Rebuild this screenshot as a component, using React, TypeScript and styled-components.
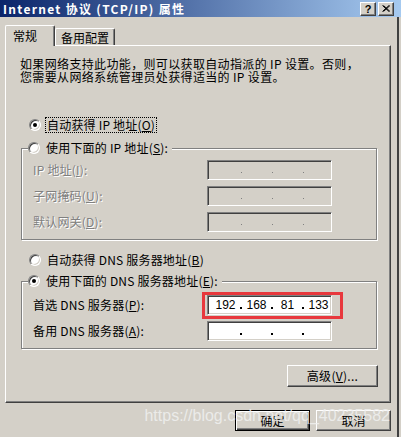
import React from 'react';
import styled, { createGlobalStyle } from 'styled-components';

const GlobalStyle = createGlobalStyle`
  html, body {
    margin: 0;
    padding: 0;
    background: #d4d0c8;
  }
  body {
    font-family: "Noto Sans CJK SC", "Liberation Sans", sans-serif;
    font-size: 12px;
    color: #000;
  }
`;

const Dialog = styled.div`
  position: relative;
  width: 401px;
  height: 437px;
  background: #d4d0c8;
  overflow: hidden;
`;

const TitleBar = styled.div`
  height: 17px;
  display: flex;
  align-items: center;
  padding: 0 7px 0 3px;
  background: linear-gradient(to right, #0a246a, #a6caf0);
`;

const TitleText = styled.div`
  flex: 1;
  color: #fff;
  font-weight: bold;
  font-size: 12px;
  line-height: 17px;
  letter-spacing: 1.3px;
  white-space: nowrap;
`;

const TitleButtons = styled.div`
  display: flex;
  gap: 2px;
`;

const CaptionButton = styled.div`
  width: 16px;
  height: 14px;
  box-sizing: border-box;
  background: #d4d0c8;
  border-top: 1px solid #fff;
  border-left: 1px solid #fff;
  border-right: 1px solid #404040;
  border-bottom: 1px solid #404040;
  box-shadow: inset -1px -1px 0 #808080;
  display: flex;
  align-items: center;
  justify-content: center;
  font-family: "Liberation Sans", sans-serif;
  font-weight: bold;
  font-size: 11px;
  line-height: 12px;
`;

const Body = styled.div`
  width: 399px;
  height: 420px;
  box-sizing: border-box;
  padding: 8px 0 0 5px;
  border-right: 2px solid #404040;
  display: flex;
  flex-direction: column;
`;

const TabRow = styled.div`
  display: flex;
  align-items: flex-end;
  height: 20px;
`;

const Tab = styled.div<{ $active?: boolean }>`
  position: relative;
  z-index: ${p => (p.$active ? 2 : 1)};
  height: ${p => (p.$active ? '21px' : '17px')};
  margin-bottom: ${p => (p.$active ? '-1px' : '0')};
  box-sizing: border-box;
  padding: ${p => (p.$active ? '2px 0 0 7px' : '1px 0 0 5px')};
  width: ${p => (p.$active ? '50px' : '60px')};
  background: #d4d0c8;
  border-top: 1px solid #fff;
  border-left: 1px solid #fff;
  border-right: 1px solid #404040;
  box-shadow: inset -1px 0 0 #808080;
  border-radius: 2px 2px 0 0;
  line-height: 15px;
  white-space: nowrap;
`;

const Panel = styled.div`
  position: relative;
  z-index: 1;
  width: 386px;
  height: 358px;
  box-sizing: border-box;
  border-top: 1px solid #fff;
  border-left: 1px solid #fff;
  border-right: 1px solid #404040;
  border-bottom: 1px solid #404040;
  box-shadow: inset -1px -1px 0 #808080;
  padding: 11px 13px 0 15px;
  display: flex;
  flex-direction: column;
`;

const Intro = styled.p`
  margin: 0 0 0 -1px;
  line-height: 13px;
  letter-spacing: 0.35px;
  white-space: nowrap;
`;

const RadioRow = styled.div<{ $top: number }>`
  display: flex;
  align-items: center;
  height: 16px;
  margin-top: ${p => p.$top}px;
  padding-left: 8px;
  gap: 4px;
`;

const Radio = styled.span<{ $checked?: boolean }>`
  width: 12px;
  height: 12px;
  box-sizing: border-box;
  flex-shrink: 0;
  border-radius: 50%;
  border: 1px solid;
  border-color: #808080 #fff #fff #808080;
  box-shadow: inset 1px 1px 0 #404040, inset -1px -1px 0 #d4d0c8;
  background: #fff;
  display: inline-flex;
  align-items: center;
  justify-content: center;

  &::after {
    content: '';
    width: 4px;
    height: 4px;
    border-radius: 50%;
    background: ${p => (p.$checked ? '#000' : 'transparent')};
  }
`;

const RadioLabel = styled.span<{ $focused?: boolean }>`
  height: 16px;
  box-sizing: border-box;
  padding: 0 1px;
  line-height: 14px;
  letter-spacing: 0.2px;
  border: 1px dotted ${p => (p.$focused ? '#000' : 'transparent')};
  white-space: nowrap;
`;

const Group = styled.div<{ $top: number }>`
  margin-top: ${p => p.$top}px;
  border: 1px solid #808080;
  box-shadow: inset 1px 1px 0 #fff, 1px 1px 0 #fff;
  display: flex;
  flex-direction: column;
`;

const GroupHeader = styled.div`
  align-self: flex-start;
  margin: -9px 0 0 6px;
  padding-right: 2px;
  height: 16px;
  background: #d4d0c8;
  display: flex;
  align-items: center;
  gap: 4px;
`;

const FieldGrid = styled.div<{ $top: number }>`
  display: grid;
  grid-template-columns: 174px 125px;
  grid-auto-rows: 20px;
  row-gap: 6px;
  padding: ${p => p.$top}px 0 7px 11px;
`;

const FieldLabel = styled.span<{ $disabled?: boolean }>`
  align-self: center;
  line-height: 14px;
  letter-spacing: 0.2px;
  white-space: nowrap;
  color: ${p => (p.$disabled ? '#808080' : '#000')};
  text-shadow: ${p => (p.$disabled ? '1px 1px 0 #fff' : 'none')};
`;

const Key = styled.span`
  text-decoration: underline;
`;

const IpBox = styled.div<{ $disabled?: boolean }>`
  width: 125px;
  height: 20px;
  box-sizing: border-box;
  border-top: 1px solid #808080;
  border-left: 1px solid #808080;
  border-right: 1px solid #fff;
  border-bottom: 1px solid #fff;
  box-shadow: inset 1px 1px 0 #404040, inset -1px -1px 0 #d4d0c8;
  background: ${p => (p.$disabled ? '#d4d0c8' : '#fff')};
  color: ${p => (p.$disabled ? '#808080' : '#000')};
  display: flex;
  align-items: center;
  padding-left: 3px;
  overflow: hidden;
  font-family: "Liberation Sans", sans-serif;
  font-size: 12px;
`;

const Octet = styled.span`
  width: 29px;
  flex-shrink: 0;
  text-align: center;
  line-height: 16px;
`;

const Dot = styled.span<{ $disabled?: boolean }>`
  width: 2px;
  flex-shrink: 0;
  display: flex;
  justify-content: center;
  margin-top: ${p => (p.$disabled ? 4 : 6)}px;

  &::before {
    content: '';
    width: ${p => (p.$disabled ? 1 : 2)}px;
    height: ${p => (p.$disabled ? 1 : 2)}px;
    background: ${p => (p.$disabled ? '#808080' : '#000')};
  }
`;

const Highlight = styled.div`
  position: absolute;
  left: -5px;
  top: -3px;
  width: 141px;
  height: 27px;
  box-sizing: border-box;
  border: 3px solid #e8383d;
  pointer-events: none;
`;

const Button = styled.button<{ $default?: boolean; $width?: number }>`
  width: ${p => p.$width ?? 75}px;
  height: ${p => (p.$width ? 22 : 21)}px;
  box-sizing: border-box;
  padding: 0;
  background: #d4d0c8;
  font-family: "Noto Sans CJK SC", "Liberation Sans", sans-serif;
  font-size: 12px;
  line-height: 14px;
  color: #000;
  border-top: 1px solid ${p => (p.$default ? '#000' : '#fff')};
  border-left: 1px solid ${p => (p.$default ? '#000' : '#fff')};
  border-right: 1px solid ${p => (p.$default ? '#000' : '#404040')};
  border-bottom: 1px solid ${p => (p.$default ? '#000' : '#404040')};
  box-shadow: ${p =>
    p.$default
      ? 'inset 1px 1px 0 #fff, inset -1px -1px 0 #404040, inset -2px -2px 0 #808080'
      : 'inset -1px -1px 0 #808080'};
`;

const AdvancedButton = styled(Button)`
  align-self: flex-end;
  margin: 16px -1px 0 0;
  letter-spacing: 0.3px;
`;

const ButtonRow = styled.div`
  display: flex;
  justify-content: flex-end;
  gap: 6px;
  margin-top: 7px;
  padding-right: 6px;
`;

const Watermark = styled.div`
  position: absolute;
  right: 11px;
  top: 406px;
  font-family: "Liberation Sans", sans-serif;
  font-size: 16px;
  line-height: 20px;
  color: rgba(240, 240, 240, 0.85);
  pointer-events: none;
  white-space: nowrap;
`;

type IpProps = { value?: string[]; disabled?: boolean };

const IpField: React.FC<IpProps> = ({ value = ['', '', '', ''], disabled }) => (
  <IpBox $disabled={disabled}>
    {value.map((part, i) => (
      <React.Fragment key={i}>
        {i > 0 && <Dot $disabled={disabled} />}
        <Octet>{part}</Octet>
      </React.Fragment>
    ))}
  </IpBox>
);

const CloseGlyph = () => (
  <svg width="8" height="7" viewBox="0 0 8 7">
    <path d="M0.5 0.5 L7 6.5 M1.5 0.5 L8 6.5 M7 0.5 L0.5 6.5 M8 0.5 L1.5 6.5" stroke="#000" strokeWidth="1" />
  </svg>
);

const App: React.FC = () => {
  return (
    <>
      <GlobalStyle />
      <Dialog>
        <TitleBar>
          <TitleText>Internet 协议 (TCP/IP) 属性</TitleText>
          <TitleButtons>
            <CaptionButton>?</CaptionButton>
            <CaptionButton>
              <CloseGlyph />
            </CaptionButton>
          </TitleButtons>
        </TitleBar>

        <Body>
          <TabRow>
            <Tab $active>常规</Tab>
            <Tab>备用配置</Tab>
          </TabRow>

          <Panel>
            <Intro>
              如果网络支持此功能，则可以获取自动指派的 IP 设置。否则，
              <br />
              您需要从网络系统管理员处获得适当的 IP 设置。
            </Intro>

            <RadioRow $top={34}>
              <Radio $checked />
              <RadioLabel $focused>
                自动获得 IP 地址(<Key>O</Key>)
              </RadioLabel>
            </RadioRow>

            <Group $top={15}>
              <GroupHeader>
                <Radio />
                <RadioLabel>
                  使用下面的 IP 地址(<Key>S</Key>):
                </RadioLabel>
              </GroupHeader>
              <FieldGrid $top={4}>
                <FieldLabel $disabled>
                  IP 地址(<Key>I</Key>):
                </FieldLabel>
                <IpField disabled />
                <FieldLabel $disabled>
                  子网掩码(<Key>U</Key>):
                </FieldLabel>
                <IpField disabled />
                <FieldLabel $disabled>
                  默认网关(<Key>D</Key>):
                </FieldLabel>
                <IpField disabled />
              </FieldGrid>
            </Group>

            <RadioRow $top={12}>
              <Radio />
              <RadioLabel>
                自动获得 DNS 服务器地址(<Key>B</Key>)
              </RadioLabel>
            </RadioRow>

            <Group $top={13}>
              <GroupHeader>
                <Radio $checked />
                <RadioLabel>
                  使用下面的 DNS 服务器地址(<Key>E</Key>):
                </RadioLabel>
              </GroupHeader>
              <FieldGrid $top={6}>
                <FieldLabel>
                  首选 DNS 服务器(<Key>P</Key>):
                </FieldLabel>
                <div style={{ position: 'relative' }}>
                  <IpField value={['192', '168', '81', '133']} />
                  <Highlight />
                </div>
                <FieldLabel>
                  备用 DNS 服务器(<Key>A</Key>):
                </FieldLabel>
                <IpField />
              </FieldGrid>
            </Group>

            <AdvancedButton $width={91}>
              高级(<Key>V</Key>)...
            </AdvancedButton>
          </Panel>

          <ButtonRow>
            <Button $default>确定</Button>
            <Button>取消</Button>
          </ButtonRow>
        </Body>

        <Watermark>https://blog.csdn.net/qq_40235582</Watermark>
      </Dialog>
    </>
  );
};

export default App;
